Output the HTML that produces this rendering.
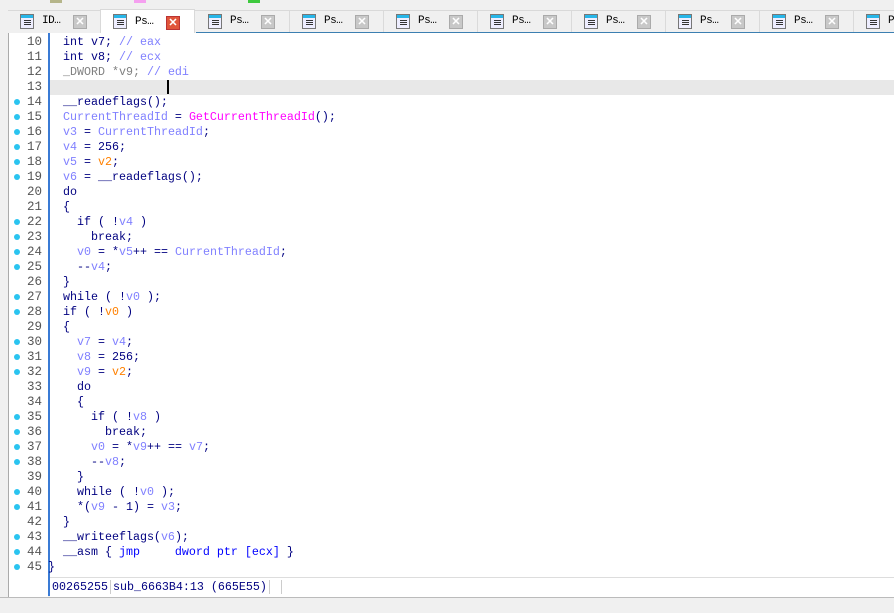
<!DOCTYPE html>
<html><head><meta charset="utf-8"><style>
html,body{margin:0;padding:0;width:894px;height:612px;overflow:hidden;background:#f0f0f0;font-family:"Liberation Mono",monospace;}
.top{position:absolute;left:0;top:0;width:894px;height:10px;background:#f0f0f0;}
.tabs{position:absolute;left:8px;top:10px;width:886px;height:22px;background:#f0f0f0;border-top:1px solid #d9d9d9;}
.tab{position:absolute;top:0;width:93px;height:22px;border-right:1px solid #dadada;font-family:"Liberation Mono","Noto Sans CJK SC",monospace;font-size:11px;}
.tab.act{background:#fff;height:24px;top:-2px;border:1px solid #d9d9d9;border-bottom:none;}
.ic{position:absolute;left:12px;top:3px;width:14px;height:15px;border:1px solid #777;background:#eef;box-sizing:border-box}
.ic:before{content:"";position:absolute;left:0;top:0;width:12px;height:3px;background:#27b6e8}
.ic:after{content:"";position:absolute;left:3px;top:5px;width:7px;height:6px;background:repeating-linear-gradient(#333 0 1px,transparent 1px 2px)}
.tl{position:absolute;left:34px;top:4px;color:#000;letter-spacing:-0.5px}
.x{position:absolute;left:65px;top:4px;width:14px;height:14px;background:#c8c8c8;border:1px solid #aaa;box-sizing:border-box;color:#fff;font-size:11px;line-height:12px;text-align:center;font-family:"Liberation Sans",sans-serif;font-weight:bold}
.x.r{background:#e0553a;border-color:#b33}
.blue{position:absolute;left:196px;top:32px;width:698px;height:1px;background:#3c7fb1}
.lp{position:absolute;left:0;top:33px;width:8px;height:564px;background:#f0f0f0;border-right:1px solid #aaa}
.gut{position:absolute;left:9px;top:33px;width:39px;height:564px;background:#fff}
.ed{position:absolute;left:48px;top:33px;width:846px;height:563px;background:#fff;border-left:2px solid #3a7bd5;}
.hl{position:absolute;left:50px;top:80px;width:844px;height:15px;background:#e8e8e8}
.ln{position:absolute;left:9px;width:33px;text-align:right;font-size:12.5px;line-height:15px;color:#555}
.dot{position:absolute;left:14px;width:6px;height:6px;border-radius:50%;background:#2ac4f0}
.code{position:absolute;left:63px;top:35px;font-size:11.67px;line-height:15px;white-space:pre;color:#000080}
.v{color:#8080ff}.o{color:#ff8000}.f{color:#ff00ff}.g{color:#808080}.b{color:#0000ff}
.st{position:absolute;left:50px;top:577px;width:844px;height:19px;border-top:1px solid #ddd;background:#fff;font-size:11.67px;line-height:18px;color:#000080;white-space:pre}
.st span{border-right:1px solid #ccc;padding:0 2px}
.bot{position:absolute;left:0;top:597px;width:894px;height:15px;background:#f0f0f0;border-top:1px solid #bbb}
.cur{position:absolute;left:167px;top:80px;width:2px;height:14px;background:#000}
</style></head><body>
<div class="top">
<div style="position:absolute;left:50px;top:0;width:12px;height:3px;background:#b5b58a"></div>
<div style="position:absolute;left:134px;top:0;width:12px;height:3px;background:#f5a0f0"></div>
<div style="position:absolute;left:248px;top:0;width:12px;height:3px;background:#3ec93e"></div>
</div>
<div class="tabs">
<div class="tab" style="left:0"><div class="ic"></div><div class="tl">ID…</div><div class="x">✕</div></div>
<div class="tab act" style="left:92px"><div class="ic" style="top:4px"></div><div class="tl" style="top:6px">Ps…</div><div class="x r" style="top:6px">✕</div></div>
<div class="tab" style="left:188px"><div class="ic"></div><div class="tl">Ps…</div><div class="x">✕</div></div>
<div class="tab" style="left:282px"><div class="ic"></div><div class="tl">Ps…</div><div class="x">✕</div></div>
<div class="tab" style="left:376px"><div class="ic"></div><div class="tl">Ps…</div><div class="x">✕</div></div>
<div class="tab" style="left:470px"><div class="ic"></div><div class="tl">Ps…</div><div class="x">✕</div></div>
<div class="tab" style="left:564px"><div class="ic"></div><div class="tl">Ps…</div><div class="x">✕</div></div>
<div class="tab" style="left:658px"><div class="ic"></div><div class="tl">Ps…</div><div class="x">✕</div></div>
<div class="tab" style="left:752px"><div class="ic"></div><div class="tl">Ps…</div><div class="x">✕</div></div>
<div class="tab" style="left:846px"><div class="ic"></div><div class="tl">Ps…</div></div>
</div>
<div class="blue"></div>
<div class="lp"></div>
<div class="gut"></div>
<div class="ed"></div>
<div class="hl"></div>
<div class="cur"></div>
<div id="g"></div>
<div class="code">int v7; <span class="v">// eax</span>
int v8; <span class="v">// ecx</span>
<span class="g">_DWORD *v9;</span> <span class="v">// edi</span>

__readeflags();
<span class="v">CurrentThreadId</span> = <span class="f">GetCurrentThreadId</span>();
<span class="v">v3</span> = <span class="v">CurrentThreadId</span>;
<span class="v">v4</span> = 256;
<span class="v">v5</span> = <span class="o">v2</span>;
<span class="v">v6</span> = __readeflags();
do
{
  if ( !<span class="v">v4</span> )
    break;
  <span class="v">v0</span> = *<span class="v">v5</span>++ == <span class="v">CurrentThreadId</span>;
  --<span class="v">v4</span>;
}
while ( !<span class="v">v0</span> );
if ( !<span class="o">v0</span> )
{
  <span class="v">v7</span> = <span class="v">v4</span>;
  <span class="v">v8</span> = 256;
  <span class="v">v9</span> = <span class="o">v2</span>;
  do
  {
    if ( !<span class="v">v8</span> )
      break;
    <span class="v">v0</span> = *<span class="v">v9</span>++ == <span class="v">v7</span>;
    --<span class="v">v8</span>;
  }
  while ( !<span class="v">v0</span> );
  *(<span class="v">v9</span> - 1) = <span class="v">v3</span>;
}
__writeeflags(<span class="v">v6</span>);
__asm { <span class="b">jmp     dword ptr [ecx]</span> }
</div>
<div style="position:absolute;left:48px;top:560px;font-size:11.67px;line-height:15px;color:#000080">}</div>
<div class="st"><span>00265255</span><span>sub_6663B4:13 (665E55)</span><span> </span></div>
<div class="bot"></div>
<script>
var dots=[14,15,16,17,18,19,22,23,24,25,27,28,30,31,32,35,36,37,38,40,41,43,44,45],h="";
for(var n=10;n<=45;n++){var y=35+(n-10)*15;h+='<div class="ln" style="top:'+y+'px">'+n+'</div>';if(dots.indexOf(n)>=0)h+='<div class="dot" style="top:'+(y+4)+'px"></div>';}
document.getElementById("g").innerHTML=h;
</script>
</body></html>
